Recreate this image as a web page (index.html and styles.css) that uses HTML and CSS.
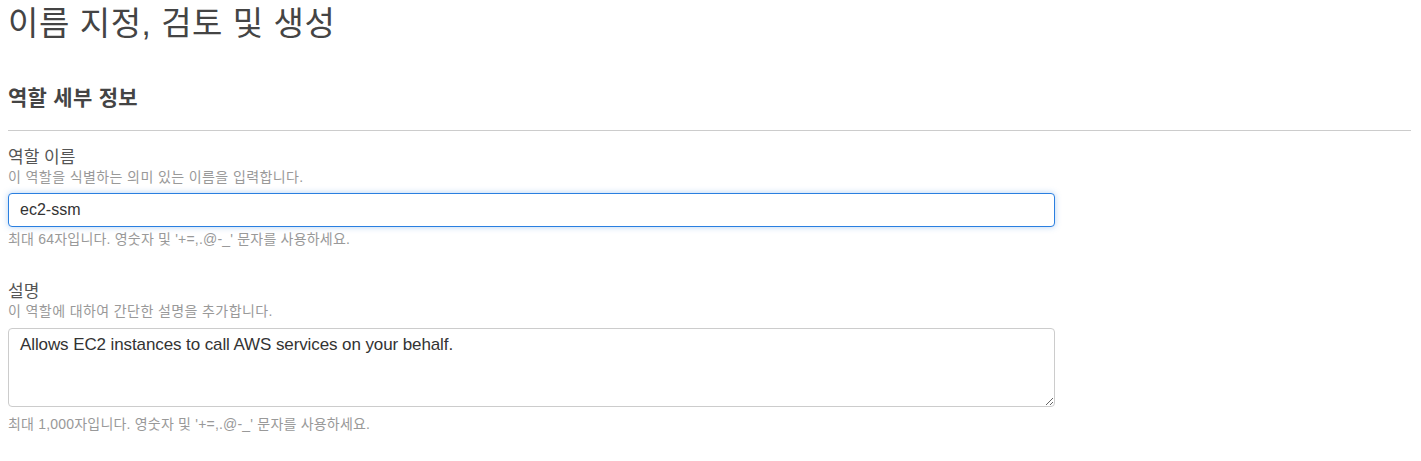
FILE: index.html
```html
<!DOCTYPE html>
<html lang="ko">
<head>
<meta charset="utf-8">
<link rel="stylesheet" href="styles.css">
</head>
<body>
<div class="page">
  <h1 class="title">이름 지정, 검토 및 생성</h1>
  <h2 class="section">역할 세부 정보</h2>
  <div class="rule"></div>
  <div class="field">
    <div class="label">역할 이름</div>
    <div class="desc">이 역할을 식별하는 의미 있는 이름을 입력합니다.</div>
    <input class="input" type="text" value="ec2-ssm">
    <div class="hint">최대 64자입니다. 영숫자 및 '+=,.@-_' 문자를 사용하세요.</div>
  </div>
  <div class="field field2">
    <div class="label">설명</div>
    <div class="desc">이 역할에 대하여 간단한 설명을 추가합니다.</div>
    <textarea class="area">Allows EC2 instances to call AWS services on your behalf.</textarea>
    <div class="hint hint-area">최대 1,000자입니다. 영숫자 및 '+=,.@-_' 문자를 사용하세요.</div>
  </div>
</div>
</body>
</html>
```
FILE: styles.css
```css
html, body { margin: 0; padding: 0; background: #fff; }
body {
  font-family: "Liberation Sans", Arial, "Noto Sans CJK KR", sans-serif;
  color: #444;
}
.page { padding: 0 10px 0 8px; }
.title {
  margin: 0;
  font-size: 33px;
  font-weight: 400;
  line-height: 48px;
  letter-spacing: 0.6px;
  color: #444;
}
.section {
  margin: 36px 0 0 0;
  font-size: 21px;
  font-weight: 700;
  line-height: 28px;
  letter-spacing: 0.3px;
  color: #444;
}
.rule {
  margin-top: 18px;
  height: 1px;
  background: #ccc;
}
.field { display: flex; flex-direction: column; margin-top: 17px; }
.field2 { margin-top: 34px; }
.label { font-size: 17px; line-height: 20px; color: #555; }
.desc { font-size: 14px; line-height: 18px; letter-spacing: 0.4px; color: #999; }
.input, .area {
  font-family: "Liberation Sans", Arial, "Noto Sans CJK KR", sans-serif;
  width: 1047px;
  box-sizing: border-box;
  margin-top: 7px;
  border-radius: 4px;
  color: #333;
  padding: 0 11px;
}
.input {
  height: 34px;
  font-size: 16px;
  border: 1px solid #2a7fe0;
  box-shadow: 0 0 6px rgba(42,127,224,0.35);
  outline: none;
}
.area {
  margin-top: 8px;
  height: 79px;
  font-size: 17px;
  line-height: 20px;
  letter-spacing: -0.1px;
  border: 1px solid #ccc;
  padding: 6px 11px;
  resize: vertical;
}
.hint { margin-top: 3px; font-size: 14px; line-height: 18px; letter-spacing: 0.2px; color: #999; }
.hint-area { margin-top: 8px; }
```
